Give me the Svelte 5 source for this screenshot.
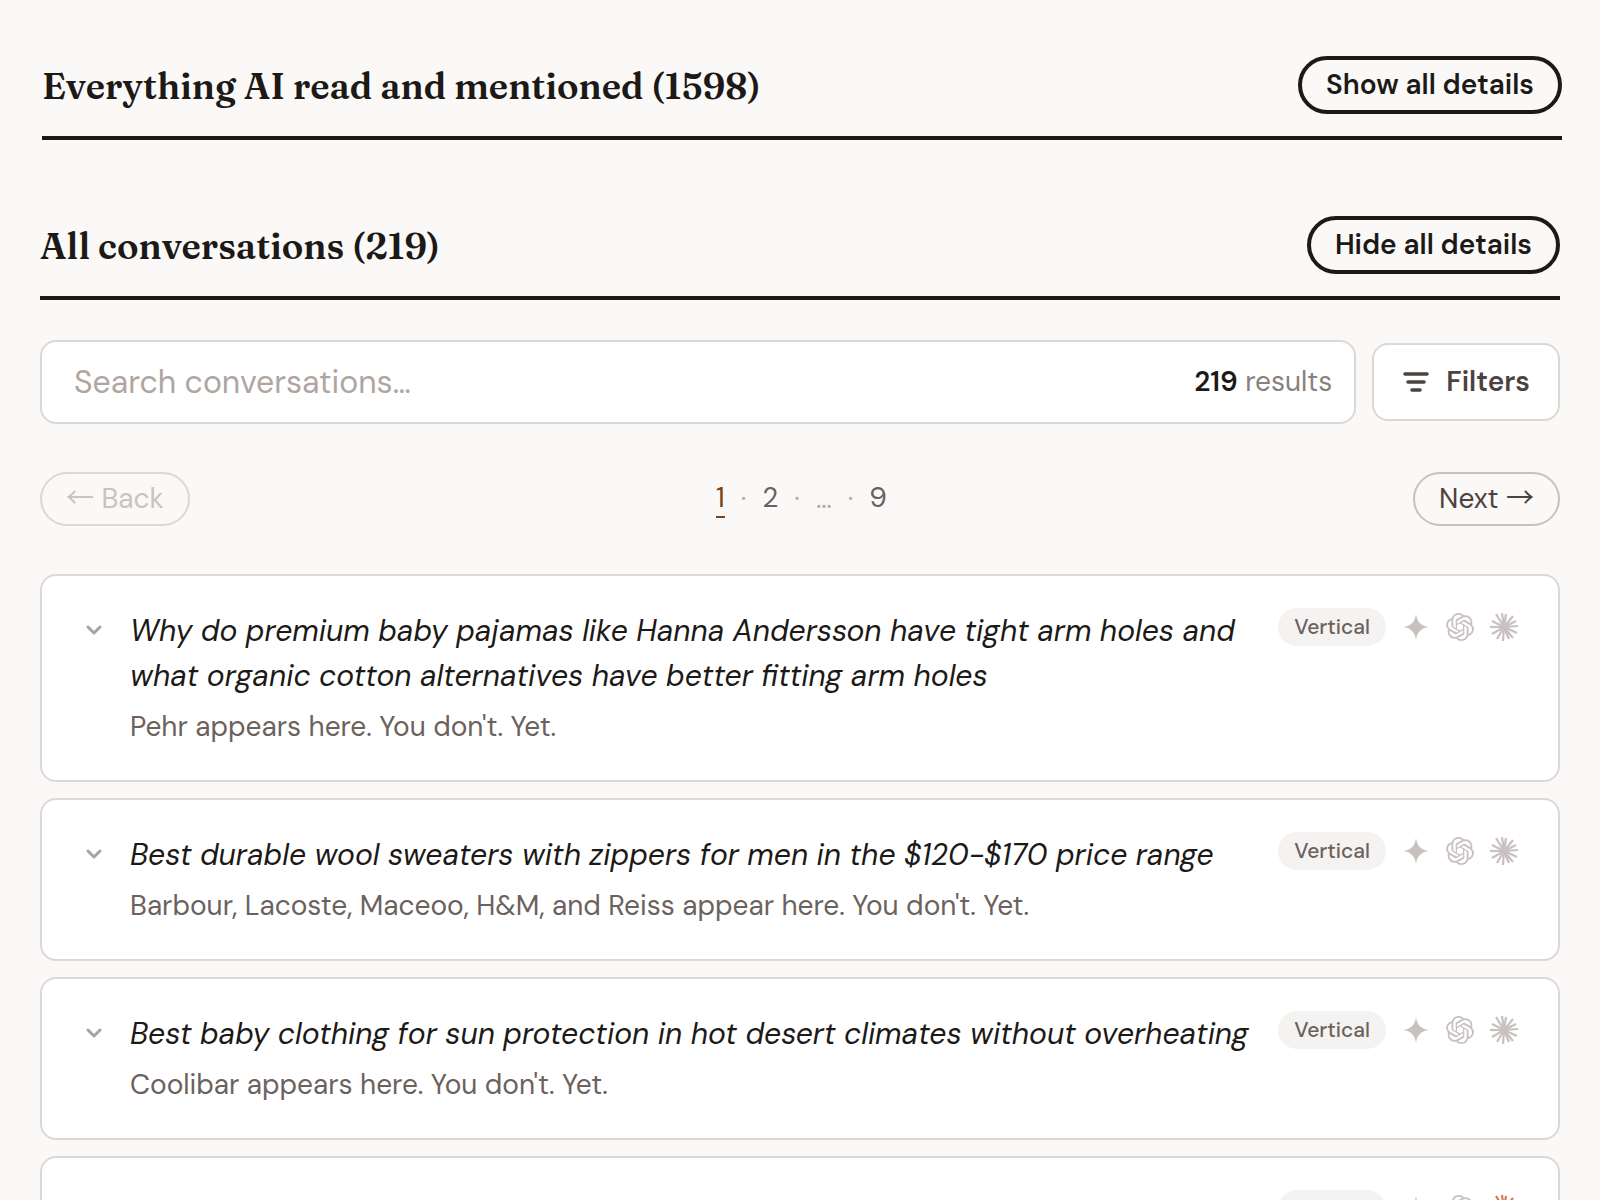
<script lang="ts">
	let search = $state('');
	let page = $state(1);

	const engines = ['gemini', 'openai', 'claude'];

	const conversations = [
		{
			query:
				'Why do premium baby pajamas like Hanna Andersson have tight arm holes and what organic cotton alternatives have better fitting arm holes',
			summary: "Pehr appears here. You don't. Yet.",
			tag: 'Vertical',
			active: ''
		},
		{
			query: 'Best durable wool sweaters with zippers for men in the $120-$170 price range',
			summary: "Barbour, Lacoste, Maceoo, H&M, and Reiss appear here. You don't. Yet.",
			tag: 'Vertical',
			active: ''
		},
		{
			query: 'Best baby clothing for sun protection in hot desert climates without overheating',
			summary: "Coolibar appears here. You don't. Yet.",
			tag: 'Vertical',
			active: ''
		},
		{ query: '', summary: '', tag: 'Vertical', active: 'claude' }
	];

	// Ray tips of the burst, measured from its centre
	const rays = [
		[-8, -13],
		[-2, -14],
		[2, -13],
		[9, -11],
		[12, -6],
		[14, -1],
		[13, 6],
		[9, 11],
		[5, 12],
		[-1, 14],
		[-7, 12],
		[-12, 7],
		[-14, 0],
		[-12, -6]
	];
</script>

<main>
	<section class="read">
		<header>
			<h2>Everything AI read and mentioned (1598)</h2>
			<button class="toggle">Show all details</button>
		</header>
	</section>

	<section class="conversations">
		<header>
			<h2>All conversations (219)</h2>
			<button class="toggle">Hide all details</button>
		</header>

		<div class="toolbar">
			<label class="search">
				<input
					type="text"
					placeholder="Search conversations…"
					aria-label="Search conversations"
					bind:value={search}
				/>
				<span class="count"><strong>219</strong> results</span>
			</label>
			<button class="filters">
				<svg viewBox="0 0 28 28" aria-hidden="true">
					<path d="M3 6h22M6 14h16M10 22h8" />
				</svg>
				Filters
			</button>
		</div>

		<nav class="pager" aria-label="Pages">
			<button class="step" disabled><span class="arrow">←</span> Back</button>
			<div class="pages">
				<button class:current={page === 1} onclick={() => (page = 1)}>1</button>
				<i>·</i>
				<button class:current={page === 2} onclick={() => (page = 2)}>2</button>
				<i>·</i>
				<span>…</span>
				<i>·</i>
				<button class:current={page === 9} onclick={() => (page = 9)}>9</button>
			</div>
			<button class="step">Next <span class="arrow">→</span></button>
		</nav>

		<ul>
			{#each conversations as item}
				<li>
					<svg class="chevron" viewBox="0 0 24 24" aria-hidden="true">
						<path d="M6 9l6 6 6-6" />
					</svg>
					<div class="body">
						{#if item.query}
							<h3>{item.query}</h3>
							<p>{item.summary}</p>
						{/if}
					</div>
					<div class="meta">
						<span class="tag">{item.tag}</span>
						{#each engines as engine}
							<svg
								class="engine {engine}"
								class:active={item.active === engine}
								viewBox={engine === 'openai' ? '0 0 24 24' : '0 0 28 28'}
								aria-hidden="true"
							>
								{#if engine === 'gemini'}
									<path d="M14 1C15 9 19 13 27 14C19 15 15 19 14 27C13 19 9 15 1 14C9 13 13 9 14 1Z" />
								{:else if engine === 'openai'}
									<path
										d="M22.2819 9.8211a5.9847 5.9847 0 0 0-.5157-4.9108 6.0462 6.0462 0 0 0-6.5098-2.9A6.0651 6.0651 0 0 0 4.9807 4.1818a5.9847 5.9847 0 0 0-3.9977 2.9 6.0462 6.0462 0 0 0 .7427 7.0966 5.98 5.98 0 0 0 .511 4.9107 6.051 6.051 0 0 0 6.5146 2.9001A5.9847 5.9847 0 0 0 13.2599 24a6.0557 6.0557 0 0 0 5.7718-4.2058 5.9894 5.9894 0 0 0 3.9977-2.9001 6.0557 6.0557 0 0 0-.7475-7.0729zm-9.022 12.6081a4.4755 4.4755 0 0 1-2.8764-1.0408l.1419-.0804 4.7783-2.7582a.7948.7948 0 0 0 .3927-.6813v-6.7369l2.02 1.1686a.071.071 0 0 1 .038.052v5.5826a4.504 4.504 0 0 1-4.4945 4.4944zm-9.6607-4.1254a4.4708 4.4708 0 0 1-.5346-3.0137l.142.0852 4.783 2.7582a.7712.7712 0 0 0 .7806 0l5.8428-3.3685v2.3324a.0804.0804 0 0 1-.0332.0615L9.74 19.9502a4.4992 4.4992 0 0 1-6.1408-1.6464zM2.3408 7.8956a4.485 4.485 0 0 1 2.3655-1.9728V11.6a.7664.7664 0 0 0 .3879.6765l5.8144 3.3543-2.0201 1.1685a.0757.0757 0 0 1-.071 0l-4.8303-2.7865A4.504 4.504 0 0 1 2.3408 7.872zm16.5963 3.8558L13.1038 8.364 15.1192 7.2a.0757.0757 0 0 1 .071 0l4.8303 2.7913a4.4944 4.4944 0 0 1-.6765 8.1042v-5.6772a.79.79 0 0 0-.407-.667zm2.0107-3.0231l-.142-.0852-4.7735-2.7818a.7759.7759 0 0 0-.7854 0L9.409 9.2297V6.8974a.0662.0662 0 0 1 .0284-.0615l4.8303-2.7866a4.4992 4.4992 0 0 1 6.6802 4.66zM8.3065 12.863l-2.02-1.1638a.0804.0804 0 0 1-.038-.0567V6.0742a4.4992 4.4992 0 0 1 7.3757-3.4537l-.142.0805L8.704 5.459a.7948.7948 0 0 0-.3927.6813zm1.0976-2.3654l2.602-1.4998 2.6069 1.4998v2.9994l-2.5974 1.4997-2.6067-1.4997Z"
									/>
								{:else}
									{#each rays as [x, y]}
										<path d="M14 14l{x} {y}" />
									{/each}
								{/if}
							</svg>
						{/each}
					</div>
				</li>
			{/each}
		</ul>
	</section>
</main>

<style>
	:global(body) {
		margin: 0;
		background: #faf9f7;
	}

	main {
		font-family: 'DM Sans', Lato, sans-serif;
		font-size: 28px;
		line-height: 36px;
		color: #1c1917;
		height: 100vh;
		overflow: hidden;
	}

	button,
	input {
		font: inherit;
		color: inherit;
		cursor: pointer;
	}

	.read {
		padding: 56px 38px 0 42px;
	}

	.conversations {
		padding: 76px 40px 0;
	}

	header {
		display: flex;
		align-items: center;
		justify-content: space-between;
		padding-bottom: 22px;
		border-bottom: 4px solid #1c1917;
	}

	h2 {
		margin: 0;
		padding-top: 2px;
		font: 600 36px/48px Fraunces, 'Liberation Serif', serif;
	}

	.toggle {
		height: 58px;
		padding: 0 24px;
		border: 4px solid #1c1917;
		border-radius: 29px;
		background: none;
		font-weight: 600;
	}

	.toolbar {
		display: flex;
		align-items: center;
		gap: 16px;
		margin-top: 40px;
	}

	.search {
		display: flex;
		flex: 1;
		align-items: center;
		height: 84px;
		padding: 0 22px 0 32px;
		box-sizing: border-box;
		border: 2px solid #dcd8d5;
		border-radius: 16px;
		background: #fff;
	}

	.search input {
		flex: 1;
		min-width: 0;
		padding: 0;
		border: 0;
		outline: 0;
		background: none;
		font-size: 32px;
		line-height: 42px;
		cursor: text;
	}

	.search input::placeholder {
		color: #afa5a1;
		opacity: 1;
	}

	.count {
		color: #8a807c;
	}

	.count strong {
		font-weight: 600;
		color: #1c1917;
	}

	.filters {
		display: flex;
		align-items: center;
		gap: 16px;
		height: 78px;
		padding: 0 28px;
		border: 2px solid #dcd8d5;
		border-radius: 16px;
		background: #fff;
		color: #4c4340;
		font-weight: 600;
	}

	.filters svg {
		width: 28px;
		height: 28px;
		fill: none;
		stroke: currentColor;
		stroke-width: 3.5;
		stroke-linecap: round;
	}

	.pager {
		display: flex;
		align-items: center;
		justify-content: space-between;
		margin: 48px 0;
	}

	.step {
		height: 54px;
		padding: 0 24px;
		border: 2px solid #c9c0c0;
		border-radius: 27px;
		background: none;
		color: #4c4340;
	}

	.step:disabled {
		border-color: #dcd8d5;
		color: #cbc3c1;
		cursor: default;
	}

	.arrow {
		font-family: 'Noto Sans CJK JP', sans-serif;
		line-height: 1;
	}

	.pages {
		display: flex;
		align-items: center;
		gap: 16px;
		color: #6b625e;
	}

	.pages button {
		padding: 0;
		border: 0;
		border-bottom: 2px solid transparent;
		background: none;
	}

	.pages .current {
		border-color: #7c4212;
		color: #7c4212;
	}

	.pages i,
	.pages span {
		color: #b5aba8;
		font-style: normal;
	}

	ul {
		display: flex;
		flex-direction: column;
		gap: 16px;
		margin: 0;
		padding: 0;
		list-style: none;
	}

	li {
		display: flex;
		align-items: flex-start;
		padding: 32px 40px;
		border: 2px solid #dcd8d8;
		border-radius: 16px;
		background: #fff;
	}

	.chevron {
		flex: none;
		width: 24px;
		height: 24px;
		margin: 10px 24px 0 0;
		fill: none;
		stroke: #aca1a1;
		stroke-width: 3;
		stroke-linecap: round;
		stroke-linejoin: round;
	}

	.body {
		flex: 1;
		min-height: 95px;
	}

	h3 {
		margin: 0;
		font-size: 30px;
		font-style: italic;
		font-weight: 400;
		line-height: 45px;
	}

	p {
		margin: 8px 0 0;
		line-height: 42px;
		color: #6b625e;
	}

	.meta {
		display: flex;
		flex: none;
		align-items: center;
		gap: 16px;
		margin-left: 24px;
	}

	.tag {
		padding: 0 16px;
		border-radius: 19px;
		background: #f4f3f1;
		color: #6b625e;
		font-size: 21px;
		font-weight: 500;
		line-height: 38px;
	}

	.engine {
		width: 28px;
		height: 28px;
		fill: #c9c0c0;
	}

	.claude {
		stroke: #c9c0c0;
		stroke-width: 2.2;
	}

	.claude.active {
		stroke: #d97757;
	}
</style>
